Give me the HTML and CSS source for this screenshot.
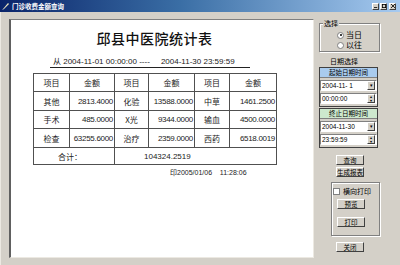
FILE: index.html
```html
<!DOCTYPE html>
<html>
<head>
    <title>门诊收费金额查询</title>
    <link rel="stylesheet" href="styles.css">
</head>
<body>
    <div class="window">
        <div class="titlebar">
            <svg class="app-icon" width="8" height="8" viewBox="0 0 8 8">
                <path d="M1 7 L6 1 L7 2 L2 7 Z" fill="#f0e8c0"/>
                <path d="M0 8 L1 7 L2 7 Z" fill="#fff"/>
            </svg>
            <span class="title-text">门诊收费金额查询</span>
            <div class="caption-buttons">
                <span class="cap-btn"><svg width="5" height="5" viewBox="0 0 5 5"><rect x="0" y="4" width="4" height="1" fill="#000"/></svg></span>
                <span class="cap-btn"><svg width="5" height="5" viewBox="0 0 5 5"><rect x="0.5" y="0.5" width="4" height="4" fill="none" stroke="#000"/></svg></span>
                <span class="cap-btn close"><svg width="5" height="5" viewBox="0 0 5 5"><path d="M0 0 L5 5 M5 0 L0 5" stroke="#000"/></svg></span>
            </div>
        </div>

        <div class="client">
            <div class="report">
                <div class="report-body">
                    <div class="report-title">邱县中医院统计表</div>
                    <div class="date-range">从&nbsp;2004-11-01 00:00:00 ----&nbsp;&nbsp;&nbsp;&nbsp; 2004-11-30 23:59:59</div>
                    <table class="stats">
                        <colgroup>
                            <col style="width:36px"><col style="width:45px">
                            <col style="width:34px"><col style="width:46px">
                            <col style="width:35px"><col style="width:47px">
                        </colgroup>
                        <tr class="head">
                            <td>项目</td><td>金额</td><td>项目</td><td>金额</td><td>项目</td><td>金额</td>
                        </tr>
                        <tr class="row-a">
                            <td>其他</td><td class="num">2813.4000</td>
                            <td>化验</td><td class="num">13588.0000</td>
                            <td>中草</td><td class="num">1461.2500</td>
                        </tr>
                        <tr class="row-b">
                            <td>手术</td><td class="num">485.0000</td>
                            <td>X光</td><td class="num">9344.0000</td>
                            <td>输血</td><td class="num">4500.0000</td>
                        </tr>
                        <tr class="row-a">
                            <td>检查</td><td class="num">63255.6000</td>
                            <td>治疗</td><td class="num">2359.0000</td>
                            <td>西药</td><td class="num">6518.0019</td>
                        </tr>
                        <tr class="total">
                            <td colspan="2" class="total-label">合计：</td>
                            <td colspan="4" class="total-value">104324.2519</td>
                        </tr>
                    </table>
                    <div class="print-time">印2005/01/06&nbsp;&nbsp;&nbsp; 11:28:06</div>
                </div>
            </div>

            <div class="sidebar">
                <div class="groupbox choose">
                    <span class="legend">选择</span>
                    <label class="radio-row"><span class="radio checked"></span>当日</label>
                    <label class="radio-row"><span class="radio"></span>以往</label>
                </div>

                <div class="date-label">日期选择</div>

                <div class="date-box">
                    <div class="date-head start">起始日期时间</div>
                    <div class="field">
                        <span class="field-text">2004-11- 1</span>
                        <span class="drop-btn">&#9662;</span>
                    </div>
                    <div class="field spin">
                        <span class="field-text">00:00:00</span>
                        <span class="spin-btn"><span>&#9652;</span><span>&#9662;</span></span>
                    </div>
                </div>

                <div class="date-box">
                    <div class="date-head end">终止日期时间</div>
                    <div class="field">
                        <span class="field-text">2004-11-30</span>
                        <span class="drop-btn">&#9662;</span>
                    </div>
                    <div class="field spin">
                        <span class="field-text">23:59:59</span>
                        <span class="spin-btn"><span>&#9652;</span><span>&#9662;</span></span>
                    </div>
                </div>

                <button class="btn query">查询</button>
                <button class="btn">生成报表</button>

                <div class="groupbox print-group">
                    <label class="check-row"><span class="checkbox"></span>横向打印</label>
                    <button class="btn">预览</button>
                    <button class="btn print">打印</button>
                </div>

                <button class="btn close-btn">关闭</button>
            </div>
        </div>
    </div>
</body>
</html>
```

FILE: styles.css
```css
body {
    margin: 0;
    width: 400px;
    height: 265px;
    overflow: hidden;
    font-family: "Noto Sans CJK SC", "Liberation Sans", sans-serif;
    background: #d4d0c8;
}
.window {
    display: flex;
    flex-direction: column;
    width: 400px;
    height: 265px;
    background: #d4d0c8;
}
.titlebar {
    height: 12px;
    display: flex;
    align-items: center;
    background: linear-gradient(to right, #0a246a 0%, #3a6ea5 45%, #a6caf0 100%);
    padding: 0 4px 0 2px;
}
.app-icon {
    flex: none;
}
.title-text {
    color: #fff;
    font-size: 6.5px;
    font-weight: bold;
    line-height: 12px;
    margin-left: 2px;
}
.caption-buttons {
    margin-left: auto;
    display: flex;
    gap: 1px;
}
.cap-btn {
    width: 7px;
    height: 7px;
    background: #d4d0c8;
    border: 1px solid;
    border-color: #fff #404040 #404040 #fff;
    box-sizing: border-box;
    display: flex;
    align-items: center;
    justify-content: center;
}
.cap-btn svg {
    width: 4px;
    height: 4px;
}
.cap-btn.close {
    margin-left: 1px;
}

.client {
    flex: 1;
    display: flex;
    border-left: 1px solid #ece9e2;
}
.report {
    width: 305px;
    margin: 7px 0 7px 8px;
    background: #fff;
    border-style: solid;
    border-width: 1px 1px 1px 2px;
    border-color: #808080 #ece9e2 #ece9e2 #606060;
    box-sizing: border-box;
}
.report-body {
    width: 243px;
    margin-left: 22px;
}
.report-title {
    margin-top: 8px;
    height: 20px;
    line-height: 20px;
    text-align: center;
    font-size: 14px;
    font-weight: 500;
    color: #111;
    letter-spacing: 0.5px;
}
.date-range {
    margin: 8px 0 0 17px;
    width: 197px;
    height: 11px;
    line-height: 11px;
    font-family: "Liberation Sans", "Noto Sans CJK SC", sans-serif;
    font-size: 8px;
    color: #222;
    border-bottom: 1px solid #222;
    white-space: nowrap;
    padding-left: 3px;
    box-sizing: content-box;
}
.stats {
    margin-top: 5px;
    border-collapse: collapse;
    table-layout: fixed;
    width: 243px;
    font-size: 8px;
    color: #222;
}
.stats td {
    border: 1px solid #505050;
    text-align: center;
    padding: 0;
    white-space: nowrap;
    overflow: hidden;
}
.stats .head td {
    height: 17px;
}
.stats .row-a td {
    height: 18px;
}
.stats .row-b td {
    height: 17px;
}
.stats .total td {
    height: 16px;
}
.stats .num {
    text-align: right;
    padding-right: 1px;
    font-family: "Liberation Sans", sans-serif;
    letter-spacing: -0.3px;
}
.stats .total-label {
    padding-right: 8px;
}
.stats .total-value {
    text-align: left;
    padding-left: 29px;
    font-family: "Liberation Sans", sans-serif;
}
.print-time {
    margin: 3px 0 0 137px;
    font-size: 7px;
    line-height: 10px;
    color: #222;
    font-family: "Liberation Sans", "Noto Sans CJK SC", sans-serif;
    white-space: nowrap;
}

.sidebar {
    flex: 1;
    display: flex;
    flex-direction: column;
    align-items: flex-start;
    padding-left: 5px;
    font-size: 7px;
    color: #000;
}
.groupbox {
    border: 1px solid #808080;
    box-shadow: 1px 1px 0 #fff, inset 1px 1px 0 #fff;
    box-sizing: border-box;
    position: relative;
}
.choose {
    margin-top: 11px;
    width: 61px;
    height: 29px;
    padding: 6px 0 0 17px;
}
.legend {
    position: absolute;
    left: 3px;
    top: -5px;
    background: #d4d0c8;
    padding: 0 1px;
    line-height: 9px;
}
.radio-row {
    display: flex;
    align-items: center;
    height: 10px;
    font-size: 8px;
    line-height: 10px;
}
.radio {
    width: 5px;
    height: 5px;
    border-radius: 50%;
    background: #fff;
    border: 1px solid #808080;
    margin-right: 2px;
    position: relative;
}
.radio.checked::after {
    content: "";
    position: absolute;
    left: 1.5px;
    top: 1.5px;
    width: 2px;
    height: 2px;
    border-radius: 50%;
    background: #000;
}
.date-label {
    margin: 5px 0 0 11px;
    line-height: 9px;
}
.date-box {
    margin-top: 1px;
    width: 59px;
    height: 40px;
    border: 1px solid #404040;
    box-sizing: border-box;
    display: flex;
    flex-direction: column;
}
.date-box + .date-box {
    margin-top: 1px;
}
.date-head {
    height: 9px;
    line-height: 9px;
    text-align: center;
    font-size: 6.5px;
    border-bottom: 1px solid #808080;
}
.date-head.start {
    background: #a9cbee;
}
.date-head.end {
    background: #cde8cd;
}
.field {
    margin-top: 2px;
    height: 11px;
    background: #fff;
    border: 1px solid;
    border-color: #808080 #fff #fff #808080;
    box-sizing: border-box;
    display: flex;
    align-items: center;
    font-family: "Liberation Sans", sans-serif;
    font-size: 6.5px;
}
.field.spin {
    margin-top: 2px;
}
.field-text {
    flex: 1;
    padding-left: 1px;
    white-space: nowrap;
}
.drop-btn,
.spin-btn {
    width: 8px;
    height: 9px;
    background: #d4d0c8;
    border: 1px solid;
    border-color: #fff #404040 #404040 #fff;
    box-sizing: border-box;
    font-size: 5px;
    line-height: 7px;
    text-align: center;
    margin-right: 1px;
}
.spin-btn {
    display: flex;
    flex-direction: column;
    font-size: 4px;
    line-height: 3.5px;
}
.btn {
    width: 28px;
    height: 10px;
    padding: 0;
    background: #d4d0c8;
    border: 1px solid;
    border-color: #fff #404040 #404040 #fff;
    box-sizing: border-box;
    font-family: "Noto Sans CJK SC", sans-serif;
    font-size: 6.5px;
    line-height: 8px;
    color: #000;
    margin-left: 17px;
}
.query {
    margin-top: 7px;
}
.query + .btn {
    margin-top: 2px;
}
.print-group {
    margin: 5px 0 0 12px;
    width: 49px;
    height: 54px;
    padding: 4px 0 0 0;
}
.print-group .btn {
    margin-left: 5px;
    margin-top: 4px;
}
.print-group .print {
    margin-top: 8px;
}
.check-row {
    display: flex;
    align-items: center;
    height: 8px;
    line-height: 8px;
    padding-left: 1px;
}
.checkbox {
    width: 5px;
    height: 5px;
    background: #fff;
    border: 1px solid #808080;
    margin-right: 3px;
}
.close-btn {
    margin-top: 6px;
}
```
